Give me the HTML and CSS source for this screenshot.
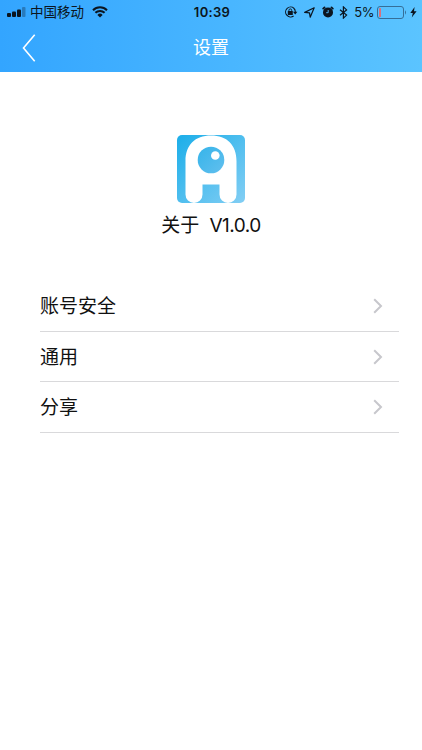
FILE: index.html
```html
<!DOCTYPE html>
<html lang="zh-CN">
<head>
    <meta charset="UTF-8">
    <meta name="viewport" content="width=device-width, initial-scale=1.0">
    <title>设置</title>
    <link rel="stylesheet" href="styles.css">
</head>
<body>
    <header class="header">
        <div class="status-bar">
            <div class="status-left">
                <svg class="signal" width="19" height="10" viewBox="0 0 19 10">
                    <rect x="0" y="6" width="4" height="4" rx="1"/>
                    <rect x="5" y="4.5" width="4" height="5.5" rx="1"/>
                    <rect x="10" y="2.5" width="4" height="7.5" rx="1"/>
                    <rect x="15" y="0" width="3.5" height="10" rx="1" opacity="0.3"/>
                </svg>
                <span class="carrier">中国移动</span>
                <svg class="wifi" width="16" height="12" viewBox="0 0 16 12">
                    <path d="M1 4.2a10 10 0 0 1 14 0M3.4 6.8a6.6 6.6 0 0 1 9.2 0" fill="none" stroke="#0b1520" stroke-width="2"/>
                    <path d="M8 11.5L5.4 8.9a3.7 3.7 0 0 1 5.2 0z"/>
                </svg>
            </div>
            <span class="time">10:39</span>
            <div class="status-right">
                <svg class="lock" width="14" height="12" viewBox="0 0 14 12">
                    <path d="M10 2.3A5 5 0 1 0 9.6 10M9.6 2a5 5 0 0 1 1.6 4.5" fill="none" stroke="#0b1520" stroke-width="1.1"/>
                    <path d="M9 5.8h4.4l-2.2 2.7z"/>
                    <rect x="3.8" y="5" width="5" height="4" rx=".5"/>
                    <path d="M4.9 5.4V4.3a1.4 1.4 0 0 1 2.8 0v1.1" fill="none" stroke="#0b1520" stroke-width=".9"/>
                </svg>
                <svg class="location" width="11" height="11" viewBox="0 0 11 11">
                    <path d="M.7 5.4L10.2.8 6.2 10.200 5.500 5.800z" fill="none" stroke="#0b1520" stroke-width="1.2" stroke-linejoin="round"/>
                </svg>
                <svg class="alarm" width="12" height="12" viewBox="0 0 12 12">
                    <circle cx="6" cy="6.4" r="5"/>
                    <path d="M1.2 2.6L2.5 1.4M10.8 2.6L9.5 1.4" stroke="#0b1520" stroke-width="1.8" stroke-linecap="round"/>
                    <path d="M6.2 4v2.7H4.2" fill="none" stroke="#54bcff" stroke-width=".9"/>
                </svg>
                <svg class="bluetooth" width="9" height="13" viewBox="0 0 9 13">
                    <path d="M1 3.7l6.6 5.4-3.2 3V.9l3.2 3L1 9.3" fill="none" stroke="#0b1520" stroke-width="1.2"/>
                </svg>
                <span class="percent">5%</span>
                <svg class="battery" width="30" height="13" viewBox="0 0 30 13">
                    <rect x=".5" y=".5" width="26" height="12" rx="2.5" fill="none" stroke="#356f98"/>
                    <rect class="level" x="2" y="2" width="2" height="9" rx=".5"/>
                    <path d="M28 4.3q2 2.2 0 4.400z" fill="#356f98"/>
                </svg>
                <svg class="bolt" width="7" height="11" viewBox="0 0 7 11">
                    <path d="M4.6 0L.3 6h2.5L1.8 10.5 6.6 4.3H4z"/>
                </svg>
            </div>
        </div>
        <div class="nav-bar">
            <svg class="back" width="14" height="30" viewBox="0 0 14 30">
                <path d="M12.7 1.7L1.5 15l11.2 13.3" fill="none" stroke="#fff" stroke-width="1.6"/>
            </svg>
            <h1>设置</h1>
        </div>
    </header>

    <main>
        <div class="about">
            <svg class="logo" width="68" height="68" viewBox="0 0 68 68">
                <defs>
                    <linearGradient id="logo-bg" x1="0" y1="0" x2="1" y2="1">
                        <stop offset="0" stop-color="#1baee9"/>
                        <stop offset="1" stop-color="#83cef4"/>
                    </linearGradient>
                    <linearGradient id="eye-bg" x1="0" y1="0" x2="1" y2="1">
                        <stop offset="0" stop-color="#35b4ea"/>
                        <stop offset="1" stop-color="#62bfee"/>
                    </linearGradient>
                </defs>
                <rect width="68" height="68" rx="5" fill="url(#logo-bg)"/>
                <path d="M8.5 26C8.5 10 18 .5 34 .5S59.5 10 59.5 26v33.5a8.5 8.5 0 0 1-17 0V49.5h-17v10a8.5 8.5 0 0 1-17 0z" fill="#fff"/>
                <circle cx="34" cy="25" r="13.3" fill="url(#eye-bg)"/>
                <circle cx="38.3" cy="20.5" r="4.3" fill="#fff"/>
            </svg>
            <p class="version">关于 <span>V1.0.0</span></p>
        </div>

        <ul class="menu">
            <li>
                <span>账号安全</span>
                <svg class="arrow" width="10" height="16" viewBox="0 0 10 16"><path d="M1.2 1.3L8 8l-6.8 6.7"/></svg>
            </li>
            <li>
                <span>通用</span>
                <svg class="arrow" width="10" height="16" viewBox="0 0 10 16"><path d="M1.2 1.3L8 8l-6.8 6.7"/></svg>
            </li>
            <li>
                <span>分享</span>
                <svg class="arrow" width="10" height="16" viewBox="0 0 10 16"><path d="M1.2 1.3L8 8l-6.8 6.7"/></svg>
            </li>
        </ul>
    </main>
</body>
</html>
```
FILE: styles.css
```css
* {
    box-sizing: border-box;
}
body {
    margin: 0;
    min-height: 100vh;
    background: #fff;
    color: #111;
    font-family: Inter, "Noto Sans CJK SC", sans-serif;
}
svg {
    display: block;
    flex-shrink: 0;
}
.header {
    height: 72px;
    background: linear-gradient(to right, #33a5ff, #5bc4ff);
}
.status-bar {
    display: grid;
    grid-template-columns: 1fr auto 1fr;
    align-items: center;
    height: 24px;
    padding: 0 5px 0 7px;
    color: #0b1520;
    fill: #0b1520;
    line-height: 24px;
}
.status-left,
.status-right {
    display: flex;
    align-items: center;
}
.status-right {
    justify-content: flex-end;
}
.carrier {
    margin: 0 8px 0 4px;
    font-size: 13.5px;
}
.time {
    font-size: 13px;
    font-weight: 600;
    letter-spacing: 0.3px;
}
.location {
    margin-left: 6px;
}
.alarm {
    margin-left: 7px;
}
.bluetooth {
    margin: 0 6px 0 5px;
}
.percent {
    font-size: 13px;
    letter-spacing: -0.4px;
}
.battery {
    margin: 0 3px;
}
.level {
    fill: #d9707c;
}
.nav-bar {
    display: grid;
    grid-template-columns: 1fr auto 1fr;
    align-items: center;
    height: 48px;
    padding: 0 22px;
}
.nav-bar h1 {
    grid-column: 2;
    margin: 0;
    color: #fff;
    font-size: 18px;
    font-weight: 400;
    line-height: 48px;
}
.about {
    display: flex;
    flex-direction: column;
    align-items: center;
    padding-top: 63px;
}
.version {
    margin: 8px 0 0;
    font-size: 19px;
    line-height: 30px;
}
.version span {
    margin-left: 5px;
    letter-spacing: -0.5px;
}
.menu {
    list-style: none;
    margin: 40px 23px 0 40px;
    padding: 0;
}
.menu li {
    display: flex;
    align-items: center;
    justify-content: space-between;
    height: 50.7px;
    padding-right: 16px;
    border-bottom: 1px solid #d9d9db;
    font-size: 19px;
    line-height: 28px;
}
.menu span {
    padding-top: 2px;
}
.arrow {
    fill: none;
    stroke: #c7c7cc;
    stroke-width: 2;
}
```
